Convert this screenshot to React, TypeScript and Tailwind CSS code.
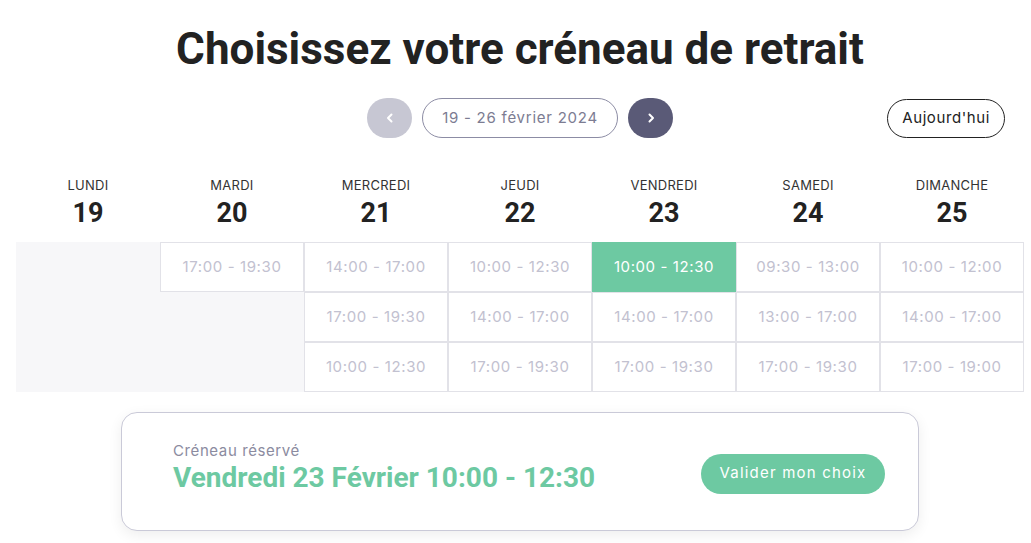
import React, { useState } from 'react';

const DAYS = [
  { name: 'Lundi', num: 19, slots: [] as string[] },
  { name: 'Mardi', num: 20, slots: ['17:00 - 19:30'] },
  { name: 'Mercredi', num: 21, slots: ['14:00 - 17:00', '17:00 - 19:30', '10:00 - 12:30'] },
  { name: 'Jeudi', num: 22, slots: ['10:00 - 12:30', '14:00 - 17:00', '17:00 - 19:30'] },
  { name: 'Vendredi', num: 23, slots: ['10:00 - 12:30', '14:00 - 17:00', '17:00 - 19:30'] },
  { name: 'Samedi', num: 24, slots: ['09:30 - 13:00', '13:00 - 17:00', '17:00 - 19:30'] },
  { name: 'Dimanche', num: 25, slots: ['10:00 - 12:00', '14:00 - 17:00', '17:00 - 19:00'] },
];

const heading = { fontFamily: 'Roboto, "Liberation Sans", sans-serif' };
const body = { fontFamily: 'Inter, "Liberation Sans", sans-serif' };

export default function App() {
  const [selected, setSelected] = useState('4-0');

  return (
    <div className="min-h-screen bg-white pl-4 pr-[7px]" style={body}>
      <div className="w-[1008px]">
        <h1 className="pt-[23px] text-center text-[44px] font-bold leading-[52px] text-[#222222]" style={heading}>
          Choisissez votre créneau de retrait
        </h1>

        <div className="mt-[23px] grid grid-cols-[1fr_auto_1fr] items-center">
          <div />
          <div className="flex items-center gap-[10px]">
            <button className="flex h-[40px] w-[45px] items-center justify-center rounded-full bg-[#c7c7d3] text-white">
              <svg width="12" height="12" viewBox="0 0 12 12" fill="none" stroke="currentColor" strokeWidth="2" strokeLinecap="round" strokeLinejoin="round">
                <path d="M7.5 2.5 4 6l3.5 3.5" />
              </svg>
            </button>
            <div className="flex h-[40px] w-[196px] items-center justify-center rounded-full border border-[#8c8ca4] text-[15px] tracking-[0.05em] text-[#7c7c92]">
              19 - 26 février 2024
            </div>
            <button className="flex h-[40px] w-[45px] items-center justify-center rounded-full bg-[#5a5a77] text-white">
              <svg width="12" height="12" viewBox="0 0 12 12" fill="none" stroke="currentColor" strokeWidth="2" strokeLinecap="round" strokeLinejoin="round">
                <path d="M4.5 2.5 8 6l-3.5 3.5" />
              </svg>
            </button>
          </div>
          <div className="flex justify-end pr-[19px]">
            <button className="flex h-[39px] items-center rounded-full border border-[#222222] px-[14px] text-[15px] tracking-[0.04em] text-[#222222]">
              Aujourd'hui
            </button>
          </div>
        </div>

        <div className="mt-[38px] grid grid-cols-7">
          {DAYS.map((d) => (
            <div key={d.name} className="flex flex-col items-center">
              <span className="text-[13px] uppercase leading-[18px] tracking-[0.02em] text-[#333333]">{d.name}</span>
              <span className="mt-[4px] text-[27px] font-bold leading-[30px] text-[#222222]" style={heading}>{d.num}</span>
            </div>
          ))}
        </div>

        <div className="mt-[14px] grid grid-cols-7 bg-[#f7f7f9]">
          {[0, 1, 2].map((row) =>
            DAYS.map((d, col) => {
              const slot = d.slots[row];
              const key = `${col}-${row}`;
              if (!slot) return <div key={key} className="h-[50px]" />;
              const isSel = selected === key;
              return (
                <button
                  key={key}
                  onClick={() => setSelected(key)}
                  className={`flex h-[50px] items-center justify-center border text-[15px] tracking-[0.04em] ${
                    isSel ? 'border-[#6dc9a2] bg-[#6dc9a2] text-white' : 'border-[#e2e2e8] bg-white text-[#c2c1d0]'
                  }`}
                >
                  {slot}
                </button>
              );
            })
          )}
        </div>

        <div className="mt-[20px] flex justify-center">
          <div className="flex h-[119px] w-[798px] items-center justify-between rounded-[16px] border border-[#cacad8] bg-white pl-[51px] pr-[33px] shadow-[0_4px_14px_rgba(0,0,0,0.07)]">
            <div className="mb-[8px] flex flex-col">
              <span className="text-[15px] leading-[20px] tracking-[0.04em] text-[#8b8ba0]">Créneau réservé</span>
              <span className="text-[28px] font-bold leading-[34px] text-[#6dc9a2]" style={heading}>
                Vendredi 23 Février 10:00 - 12:30
              </span>
            </div>
            <button className="mt-[4px] flex h-[40px] w-[184px] items-center justify-center rounded-full bg-[#6dc9a2] text-[15px] tracking-[0.08em] text-white">
              Valider mon choix
            </button>
          </div>
        </div>
      </div>
    </div>
  );
}
